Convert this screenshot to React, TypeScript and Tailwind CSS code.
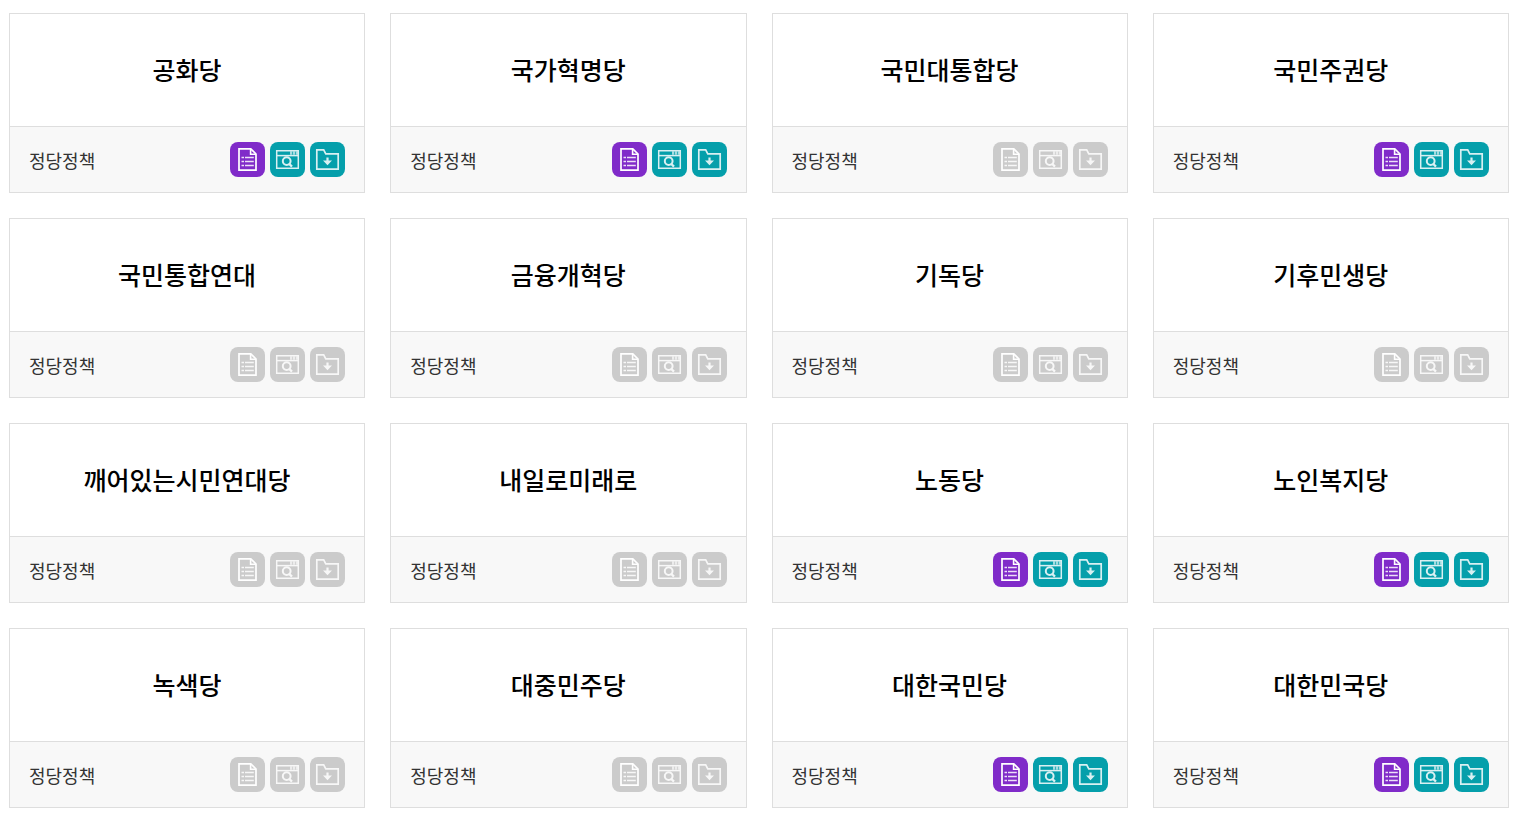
import clsx from 'clsx';

interface Party {
  name: string;
  hasPolicy: boolean;
}

const parties: Party[] = [
  { name: '공화당', hasPolicy: true },
  { name: '국가혁명당', hasPolicy: true },
  { name: '국민대통합당', hasPolicy: false },
  { name: '국민주권당', hasPolicy: true },
  { name: '국민통합연대', hasPolicy: false },
  { name: '금융개혁당', hasPolicy: false },
  { name: '기독당', hasPolicy: false },
  { name: '기후민생당', hasPolicy: false },
  { name: '깨어있는시민연대당', hasPolicy: false },
  { name: '내일로미래로', hasPolicy: false },
  { name: '노동당', hasPolicy: true },
  { name: '노인복지당', hasPolicy: true },
  { name: '녹색당', hasPolicy: false },
  { name: '대중민주당', hasPolicy: false },
  { name: '대한국민당', hasPolicy: true },
  { name: '대한민국당', hasPolicy: true },
];

function DocumentIcon() {
  return (
    <svg viewBox="0 0 35 35" className="size-full" fill="none" stroke="currentColor" aria-hidden="true">
      <path d="M9 6.8H20.8L26 12V28.2H9Z" strokeWidth="1.7" />
      <path d="M20.6 7V12.2H26" strokeWidth="1.6" />
      <path d="M11.5 15.5H14M11.5 19.5H14M11.5 23.5H14" strokeWidth="1.6" opacity="0.85" />
      <path d="M15 15.5H23.8M15 19.5H23.8M15 23.5H23.8" strokeWidth="1.6" opacity="0.85" />
    </svg>
  );
}

function BrowserSearchIcon() {
  return (
    <svg viewBox="0 0 35 35" className="size-full" fill="none" stroke="currentColor" aria-hidden="true">
      <g opacity="0.85">
        <path d="M6.7 8.7H28.3V26.3H6.7Z" strokeWidth="1.5" />
        <path d="M6.5 13.6H28.5" strokeWidth="1.5" />
        <path d="M20 11H22.3M23 11H25.3M26 11H28.3" strokeWidth="3.6" opacity="0.75" />
        <circle cx="16.7" cy="19.1" r="3.9" strokeWidth="2" />
        <path d="M18.8 21.5L22 24.6" strokeWidth="2.4" />
      </g>
    </svg>
  );
}

function FolderDownIcon() {
  return (
    <svg viewBox="0 0 35 35" className="size-full" fill="none" stroke="currentColor" aria-hidden="true">
      <g opacity="0.85">
        <path d="M6.8 7.8H13.7L15.8 11.8H28.2V27.2H6.8Z" strokeWidth="1.7" />
        <path d="M17.5 15.5V20" strokeWidth="2.2" />
        <path d="M13 18.6H22L17.5 23.3Z" fill="currentColor" stroke="none" />
      </g>
    </svg>
  );
}

const actions = [
  { label: '정책 문서', color: 'bg-[#802bc9]', Icon: DocumentIcon },
  { label: '바로보기', color: 'bg-[#059fab]', Icon: BrowserSearchIcon },
  { label: '내려받기', color: 'bg-[#059fab]', Icon: FolderDownIcon },
];

function PartyCard({ name, hasPolicy }: Party) {
  return (
    <li className="border border-[#dedede]">
      <h2 className="flex h-28 items-center justify-center pb-0.5 text-[25px] leading-9 font-medium text-black">
        {name}
      </h2>
      <div className="flex items-center justify-between border-t border-[#dedede] bg-[#f8f8f8] px-[19px] py-[15px]">
        <span className="text-lg text-[#333]">정당정책</span>
        <div className="flex gap-[5px]">
          {actions.map(({ label, color, Icon }) =>
            hasPolicy ? (
              <a
                key={label}
                href="#"
                aria-label={`${name} ${label}`}
                className={clsx('size-[35px] rounded-lg text-white', color)}
              >
                <Icon />
              </a>
            ) : (
              // 등록된 정책이 없으면 비활성 버튼
              <button
                key={label}
                type="button"
                disabled
                aria-label={`${name} ${label}`}
                className="size-[35px] rounded-lg bg-[#cbcbcb] text-white"
              >
                <Icon />
              </button>
            )
          )}
        </div>
      </div>
    </li>
  );
}

export default function App() {
  return (
    <main className="bg-white pt-[13px] pr-[14px] pb-[10px] pl-[9px] font-['Noto_Sans_CJK_KR',sans-serif]">
      <ul className="grid grid-cols-4 gap-[25px]">
        {parties.map((party) => (
          <PartyCard key={party.name} {...party} />
        ))}
      </ul>
    </main>
  );
}
